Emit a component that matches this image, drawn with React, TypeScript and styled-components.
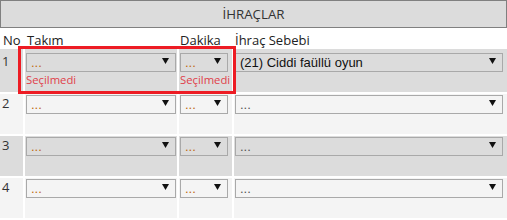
import styled, { createGlobalStyle } from "styled-components";

type RowType = {
  no: number;
  team: string;
  minute: string;
  reason: string;
  invalid?: boolean;
};

const rows: RowType[] = [
  { no: 1, team: "...", minute: "...", reason: "(21) Ciddi faüllü oyun", invalid: true },
  { no: 2, team: "...", minute: "...", reason: "..." },
  { no: 3, team: "...", minute: "...", reason: "..." },
  { no: 4, team: "...", minute: "...", reason: "..." },
];

const GlobalStyle = createGlobalStyle`
  body {
    margin: 0;
    background: #fff;
    font-family: "Open Sans", "Liberation Sans", sans-serif;
    color: #333;
  }
`;

const Panel = styled.div`
  width: 507px;
`;

const TitleBar = styled.div`
  box-sizing: border-box;
  height: 28px;
  border: 1px solid #808080;
  background: #dcdcdc;
  display: flex;
  align-items: center;
  justify-content: center;
  font-size: 13.3px;
  color: #333;
`;

const Table = styled.div`
  position: relative;
  display: grid;
  grid-template-columns: 23px 152px 53px 1fr;
  grid-template-rows: 17px 43px 40px 40px 40px;
  gap: 2px;
  padding-top: 2px;
`;

const HeadCell = styled.div<{ $pl?: number }>`
  height: 17px;
  line-height: 20px;
  font-size: 13px;
  color: #222;
  padding-left: ${({ $pl }) => $pl ?? 1}px;
  white-space: nowrap;
`;

const Cell = styled.div<{ $alt: boolean; $invalid?: boolean; $pr?: number }>`
  box-sizing: border-box;
  background: ${({ $alt }) => ($alt ? "#dcdcdc" : "#f4f4f4")};
  padding: ${({ $invalid }) => ($invalid ? 4 : 1)}px ${({ $pr }) => $pr ?? 1}px 0 1px;
  display: flex;
  flex-direction: column;
`;

const NoCell = styled(Cell)`
  padding-left: 2px;
  font-size: 13px;
  line-height: 17px;
  color: #333;
`;

const SelectBox = styled.div`
  box-sizing: border-box;
  height: 19px;
  border: 1px solid #a9a9a9;
  display: flex;
  align-items: center;
  padding: 0 6px 0 4px;
  font-family: "Liberation Sans", Arial, sans-serif;
  font-size: 13px;
`;

const SelectText = styled.span<{ $placeholder: boolean; $muted?: boolean }>`
  flex: 1;
  white-space: nowrap;
  overflow: hidden;
  color: ${({ $placeholder, $muted }) =>
    $placeholder ? ($muted ? "#555" : "#c06a10") : "#111"};
`;

const Arrow = styled.svg`
  width: 7px;
  height: 6px;
  margin-top: -3px;
  flex: none;
`;

const Error = styled.div`
  font-size: 11.3px;
  line-height: 15px;
  color: #e0404a;
  white-space: nowrap;
`;

const Highlight = styled.div`
  position: absolute;
  left: 18px;
  top: 18px;
  width: 218px;
  height: 48px;
  box-sizing: border-box;
  border: 3px solid #ed1c24;
  pointer-events: none;
`;

function Select({ value, muted }: { value: string; muted?: boolean }) {
  return (
    <SelectBox>
      <SelectText $placeholder={value === "..."} $muted={muted}>
        {value}
      </SelectText>
      <Arrow viewBox="0 0 7 6">
        <polygon points="0,0 7,0 3.5,6" fill="#111" />
      </Arrow>
    </SelectBox>
  );
}

export default function App() {
  return (
    <>
      <GlobalStyle />
      <Panel>
        <TitleBar>İHRAÇLAR</TitleBar>
        <Table>
          <HeadCell $pl={3}>No</HeadCell>
          <HeadCell $pl={2}>Takım</HeadCell>
          <HeadCell>Dakika</HeadCell>
          <HeadCell>İhraç Sebebi</HeadCell>
          {rows.map((row) => {
            const alt = row.no % 2 === 1;
            return [
              <NoCell key={`n${row.no}`} $alt={alt} $invalid={row.invalid}>
                {row.no}
              </NoCell>,
              <Cell key={`t${row.no}`} $alt={alt} $invalid={row.invalid} $pr={1}>
                <Select value={row.team} />
                {row.invalid && <Error>Seçilmedi</Error>}
              </Cell>,
              <Cell key={`d${row.no}`} $alt={alt} $invalid={row.invalid} $pr={4}>
                <Select value={row.minute} />
                {row.invalid && <Error>Seçilmedi</Error>}
              </Cell>,
              <Cell key={`r${row.no}`} $alt={alt} $invalid={row.invalid} $pr={4}>
                <Select value={row.reason} muted />
              </Cell>,
            ];
          })}
          <Highlight />
        </Table>
      </Panel>
    </>
  );
}
